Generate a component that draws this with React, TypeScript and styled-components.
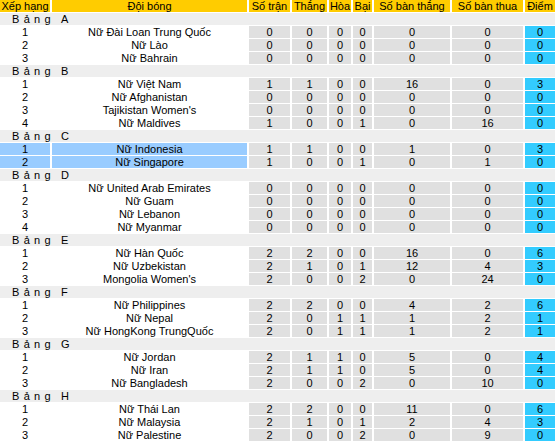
import React from 'react';
import styled, { createGlobalStyle } from 'styled-components';

const GlobalStyle = createGlobalStyle`
  html, body {
    margin: 0;
    padding: 0;
    background: #ffffff;
  }
  body {
    font-family: 'Liberation Sans', Arial, sans-serif;
    font-size: 11px;
    color: #000000;
  }
`;

const Table = styled.div`
  display: grid;
  grid-template-columns: 50px 195px 41px 35px 22px 19px 76px 71px 1fr;
  grid-auto-rows: 12px;
  column-gap: 2px;
  row-gap: 1px;
  width: 555px;
`;

const HeadCell = styled.div`
  background: #ffcc00;
  line-height: 12px;
  text-align: center;
  white-space: nowrap;
  overflow: hidden;
`;

const GroupRow = styled.div`
  grid-column: 1 / -1;
  background: #eeeeee;
  line-height: 12px;
  padding-left: 12px;
  display: flex;
`;

const GroupWord = styled.span`
  letter-spacing: 4.3px;
`;

const GroupLetter = styled.span`
  margin-left: 6px;
`;

const Cell = styled.div<{ $tone?: 'plain' | 'stat' | 'point' | 'pick' }>`
  line-height: 12px;
  text-align: center;
  white-space: nowrap;
  overflow: hidden;
  background: ${({ $tone }) =>
    $tone === 'stat' ? '#e0e0e0' : $tone === 'point' ? '#33ccff' : $tone === 'pick' ? '#99ccff' : 'transparent'};
`;

type Team = { name: string; stats: number[]; pick?: boolean };

const groups: { label: string; teams: Team[] }[] = [
  {
    label: 'A',
    teams: [
      { name: 'Nữ Đài Loan Trung Quốc', stats: [0, 0, 0, 0, 0, 0, 0] },
      { name: 'Nữ Lào', stats: [0, 0, 0, 0, 0, 0, 0] },
      { name: 'Nữ Bahrain', stats: [0, 0, 0, 0, 0, 0, 0] },
    ],
  },
  {
    label: 'B',
    teams: [
      { name: 'Nữ Việt Nam', stats: [1, 1, 0, 0, 16, 0, 3] },
      { name: 'Nữ Afghanistan', stats: [0, 0, 0, 0, 0, 0, 0] },
      { name: "Tajikistan Women's", stats: [0, 0, 0, 0, 0, 0, 0] },
      { name: 'Nữ Maldives', stats: [1, 0, 0, 1, 0, 16, 0] },
    ],
  },
  {
    label: 'C',
    teams: [
      { name: 'Nữ Indonesia', stats: [1, 1, 0, 0, 1, 0, 3], pick: true },
      { name: 'Nữ Singapore', stats: [1, 0, 0, 1, 0, 1, 0], pick: true },
    ],
  },
  {
    label: 'D',
    teams: [
      { name: 'Nữ United Arab Emirates', stats: [0, 0, 0, 0, 0, 0, 0] },
      { name: 'Nữ Guam', stats: [0, 0, 0, 0, 0, 0, 0] },
      { name: 'Nữ Lebanon', stats: [0, 0, 0, 0, 0, 0, 0] },
      { name: 'Nữ Myanmar', stats: [0, 0, 0, 0, 0, 0, 0] },
    ],
  },
  {
    label: 'E',
    teams: [
      { name: 'Nữ Hàn Quốc', stats: [2, 2, 0, 0, 16, 0, 6] },
      { name: 'Nữ Uzbekistan', stats: [2, 1, 0, 1, 12, 4, 3] },
      { name: "Mongolia Women's", stats: [2, 0, 0, 2, 0, 24, 0] },
    ],
  },
  {
    label: 'F',
    teams: [
      { name: 'Nữ Philippines', stats: [2, 2, 0, 0, 4, 2, 6] },
      { name: 'Nữ Nepal', stats: [2, 0, 1, 1, 1, 2, 1] },
      { name: 'Nữ HongKong TrungQuốc', stats: [2, 0, 1, 1, 1, 2, 1] },
    ],
  },
  {
    label: 'G',
    teams: [
      { name: 'Nữ Jordan', stats: [2, 1, 1, 0, 5, 0, 4] },
      { name: 'Nữ Iran', stats: [2, 1, 1, 0, 5, 0, 4] },
      { name: 'Nữ Bangladesh', stats: [2, 0, 0, 2, 0, 10, 0] },
    ],
  },
  {
    label: 'H',
    teams: [
      { name: 'Nữ Thái Lan', stats: [2, 2, 0, 0, 11, 0, 6] },
      { name: 'Nữ Malaysia', stats: [2, 1, 0, 1, 2, 4, 3] },
      { name: 'Nữ Palestine', stats: [2, 0, 0, 2, 0, 9, 0] },
    ],
  },
];

const headers = ['Xếp hạng', 'Đội bóng', 'Số trận', 'Thắng', 'Hòa', 'Bại', 'Số bàn thắng', 'Số bàn thua', 'Điểm'];

const App: React.FC = () => {
  return (
    <>
      <GlobalStyle />
      <Table>
        {headers.map((h) => (
          <HeadCell key={h}>{h}</HeadCell>
        ))}
        {groups.map((g) => (
          <React.Fragment key={g.label}>
            <GroupRow>
              <GroupWord>Bảng</GroupWord>
              <GroupLetter>{g.label}</GroupLetter>
            </GroupRow>
            {g.teams.map((t, i) => (
              <React.Fragment key={t.name}>
                <Cell $tone={t.pick ? 'pick' : 'plain'}>{i + 1}</Cell>
                <Cell $tone={t.pick ? 'pick' : 'plain'}>{t.name}</Cell>
                {t.stats.map((s, j) => (
                  <Cell key={j} $tone={j === 6 ? 'point' : 'stat'}>
                    {s}
                  </Cell>
                ))}
              </React.Fragment>
            ))}
          </React.Fragment>
        ))}
      </Table>
    </>
  );
};

export default App;
